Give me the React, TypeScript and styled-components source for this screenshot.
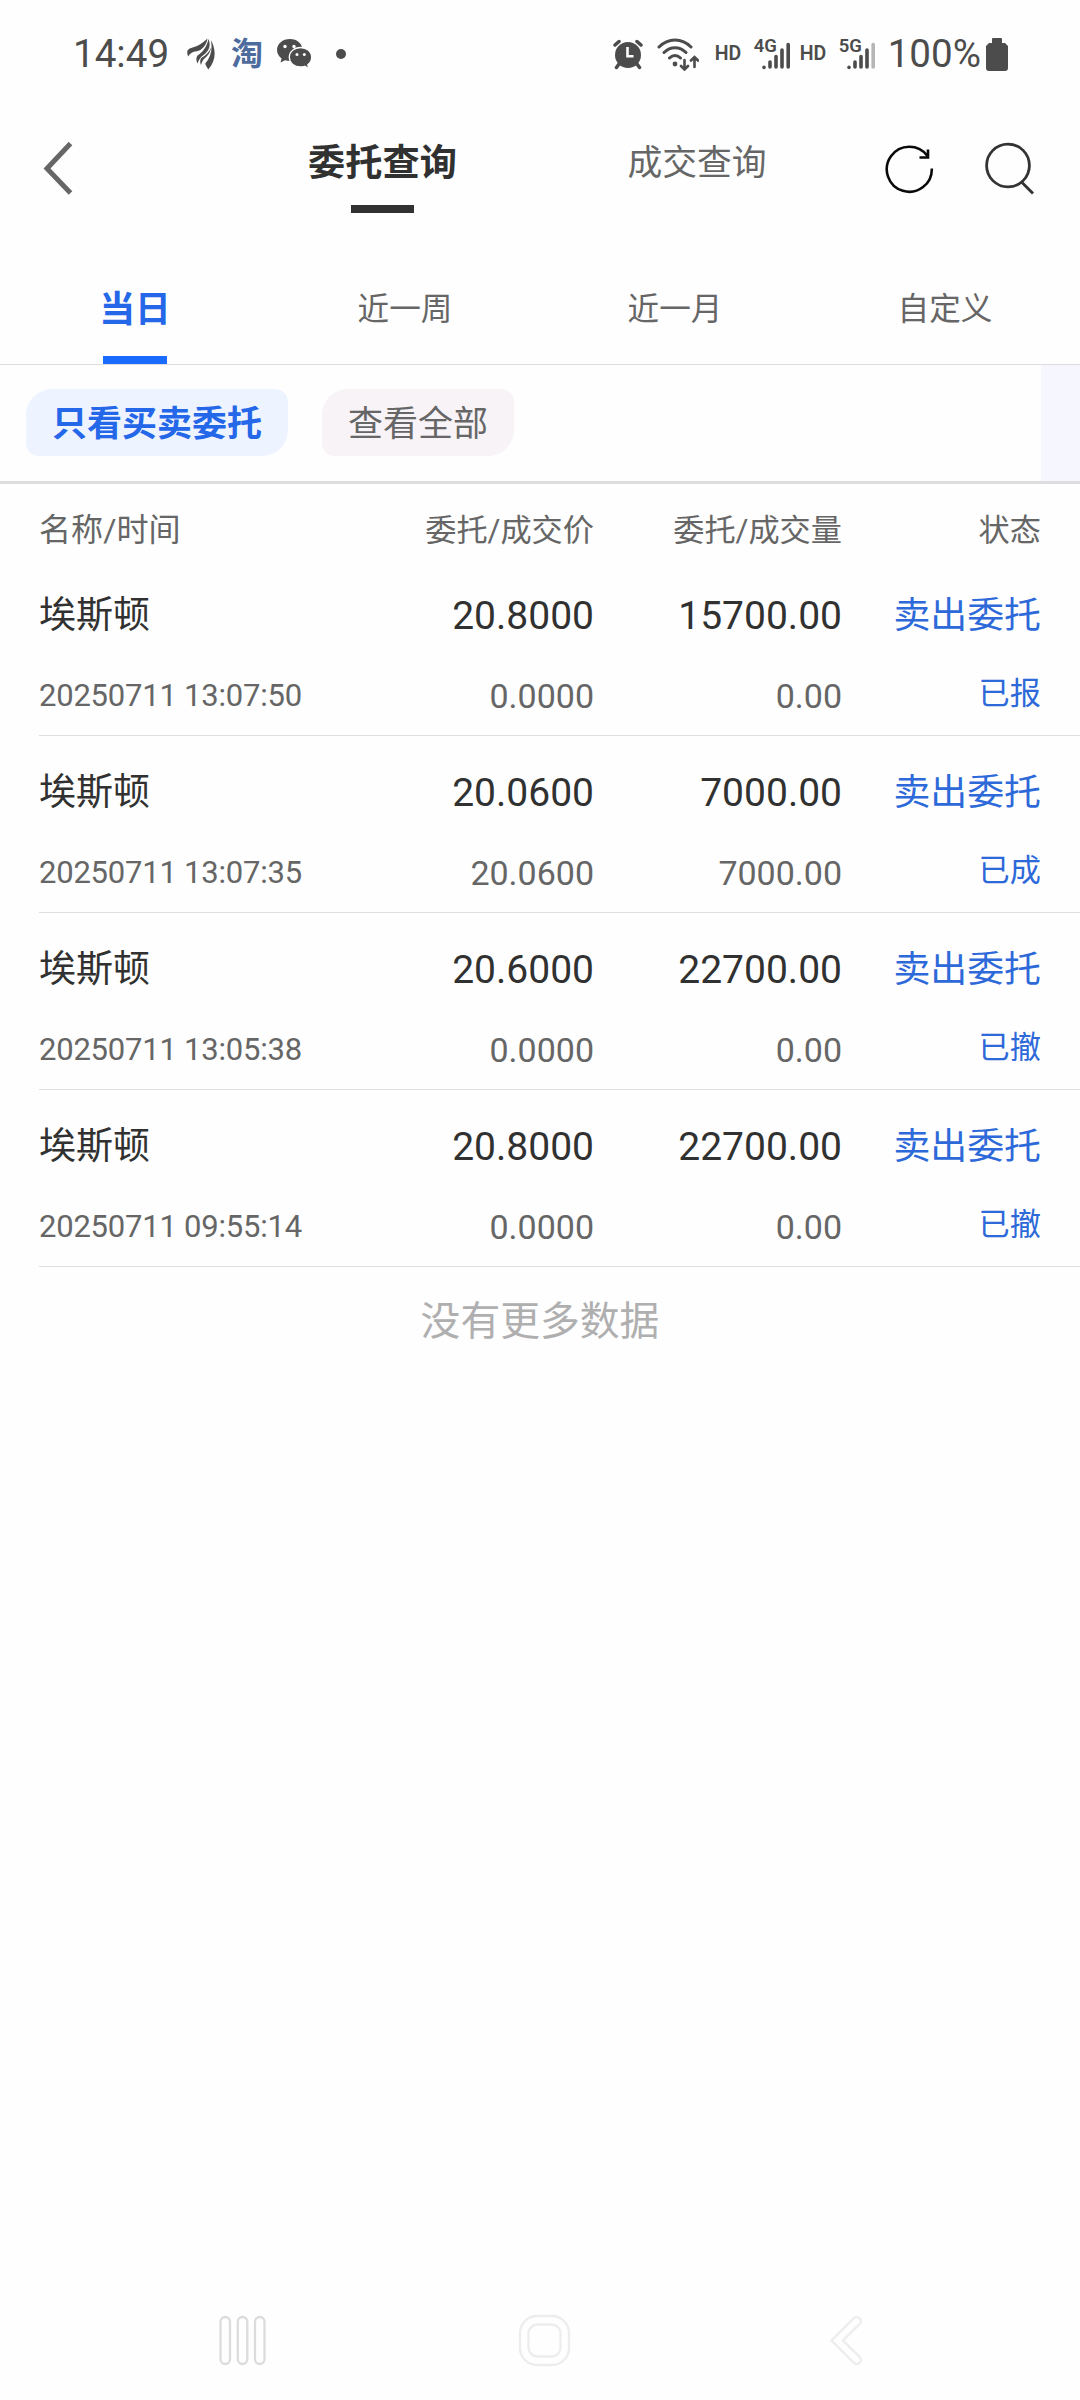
import React from 'react';
import styled, { createGlobalStyle } from 'styled-components';

const GlobalStyle = createGlobalStyle`
  * { box-sizing: border-box; }
  body { margin: 0; background: #fefefe; }
  svg { display: block; flex: none; }
`;

const Screen = styled.div`
  display: flex;
  flex-direction: column;
  width: 1080px;
  height: 2400px;
  overflow: hidden;
  background: #fefefe;
  color: #666;
  font-family: Roboto, "Noto Sans CJK SC", sans-serif;
  white-space: nowrap;
`;

const StatusBar = styled.header`
  display: flex;
  align-items: center;
  justify-content: space-between;
  height: 108px;
  padding: 0 72px 0 73px;
  color: #4b4c4b;
`;

const StatusGroup = styled.div`
  display: flex;
  align-items: center;
`;

const StatusText = styled.span`
  font-size: 38.6px;
  line-height: 46px;
`;

const TaoMark = styled.span`
  margin-left: 16px;
  width: 32px;
  color: #4d6b9d;
  font-size: 32px;
  font-weight: 700;
  line-height: 40px;
`;

const Slot = styled.span<{ $left: number }>`
  display: flex;
  margin-left: ${(p) => p.$left}px;
`;

const HdMark = styled.span<{ $left: number }>`
  width: 27px;
  margin-left: ${(p) => p.$left}px;
  font-size: 19.5px;
  font-weight: 600;
  line-height: 24px;
`;

const SignalBox = styled.span`
  display: grid;
  grid-template: 32px / 37px;
  margin-left: 12px;
`;

const SignalLabel = styled.span`
  grid-area: 1 / 1;
  font-size: 18.5px;
  font-weight: 600;
  line-height: 17px;
`;

const SignalBars = styled.svg`
  grid-area: 1 / 1;
`;

const NavBar = styled.nav`
  display: grid;
  grid-template-columns: 225px 315px 314px 226px;
  height: 152px;
`;

const BackButton = styled.div`
  padding: 34px 0 0 42px;
`;

const NavTab = styled.div<{ $active?: boolean }>`
  display: flex;
  flex-direction: column;
  align-items: center;
  padding-top: 29px;
  color: ${(p) => (p.$active ? '#303130' : '#666')};
  font-size: ${(p) => (p.$active ? 37.2 : 34.8)}px;
  font-weight: ${(p) => (p.$active ? 700 : 400)};
  line-height: 52px;
`;

const NavUnderline = styled.i`
  width: 63px;
  height: 8px;
  margin-top: 16px;
  background: #303130;
`;

const NavActions = styled.div`
  display: flex;
  gap: 50px;
  padding: 34px 0 0 30px;
`;

const RangeTabs = styled.div`
  display: grid;
  grid-template-columns: repeat(4, 1fr);
  height: 105px;
  border-bottom: 1px solid #dcdcdc;
`;

const RangeTab = styled.div<{ $active?: boolean }>`
  display: flex;
  flex-direction: column;
  align-items: center;
  justify-content: space-between;
  padding-top: 24px;
  color: ${(p) => (p.$active ? '#2467e8' : '#666')};
  font-size: ${(p) => (p.$active ? 35.8 : 31.6)}px;
  font-weight: ${(p) => (p.$active ? 700 : 400)};
  line-height: 52px;
`;

const RangeUnderline = styled.i`
  width: 64px;
  height: 8px;
  background: #1b6aff;
`;

const FilterBar = styled.div`
  display: flex;
  gap: 34px;
  height: 119px;
  padding-left: 26px;
  border-bottom: 3px solid #dedcde;
`;

const Chip = styled.div<{ $active?: boolean }>`
  height: 67px;
  margin-top: 24px;
  padding: 0 26px;
  border-radius: 26px 13px 26px 13px;
  background: ${(p) => (p.$active ? '#edf3ff' : '#f7f3f7')};
  color: ${(p) => (p.$active ? '#2467e8' : '#666')};
  font-size: 35px;
  font-weight: ${(p) => (p.$active ? 700 : 400)};
  line-height: 71px;
`;

const FilterEdge = styled.div`
  width: 39px;
  margin-left: auto;
  background: #f5f6fe;
`;

const OrderGrid = styled.div`
  display: grid;
  grid-template-columns: 255px 300px 248px 199px;
  padding-right: 39px;
`;

const HeadGrid = styled(OrderGrid)`
  height: 75px;
  padding-left: 39px;
  line-height: 93px;
`;

const Cell = styled.span<{ $start?: boolean }>`
  text-align: ${(p) => (p.$start ? 'left' : 'right')};
`;

const HeadCell = styled(Cell)`
  font-size: ${(p) => (p.$start ? 32.1 : 31.2)}px;
`;

const OrderList = styled.div`
  padding-left: 39px;
`;

const OrderRow = styled(OrderGrid)`
  grid-template-rows: 111px 65px;
  height: 177px;
  border-bottom: 1px solid #dfdfdf;
`;

const Name = styled(Cell)`
  color: #303130;
  font-size: 37px;
  line-height: 113px;
`;

const Figure = styled(Cell)`
  color: #303130;
  font-size: 39px;
  line-height: 114px;
`;

const Direction = styled(Cell)`
  color: #2d69d9;
  font-size: 36.9px;
  line-height: 113px;
`;

const Stamp = styled(Cell)`
  font-size: 31px;
  letter-spacing: -0.22px;
  line-height: 52px;
`;

const SubFigure = styled(Cell)`
  font-size: 34px;
  line-height: 52px;
`;

const State = styled(Cell)`
  color: #2d69d9;
  font-size: 31.2px;
  line-height: 48px;
`;

const EndNote = styled.p`
  margin: 24px 0 0;
  color: #b0afb0;
  font-size: 39.8px;
  line-height: 62px;
  text-align: center;
`;

const SystemNav = styled.footer`
  display: grid;
  grid-template-columns: 300px 311px 1fr;
  align-items: center;
  margin-top: auto;
  height: 119px;
  padding-left: 218px;
`;

const FeatherIcon = () => (
  <svg width="28" height="32" viewBox="0 0 28 32" fill="#4b4c4b">
    <path d="M0.500 12.500C2 10 6 9.500 10 8C14 6.500 17 3.500 20.500 0.500C19.500 7 15 12.500 9.500 13.300C5.500 14 3.500 15 1.200 18.500C0.300 16.500 0 14.500 0.500 12.500Z" />
    <path d="M21.500 1C24.200 7.500 22 13 16.500 17C13.200 19.500 12 21.500 10.500 25.500C9.300 23 8.800 20.300 10.300 17.800C15 14.500 19.500 10 21.500 1Z" />
    <path d="M23.800 2C29.500 12 29 23 21.300 31.500C20.300 29.500 18.500 27.500 18.300 25.500C24 19 25.800 11 23.800 2Z" />
    <path d="M24.300 9C23.500 14 21 18 17.500 20.500C15.800 22 14.500 24.500 14 27C13 24.500 12.800 22 14.300 20C18.500 17.500 22.500 14 24.300 9Z" />
  </svg>
);

const ChatIcon = () => (
  <svg width="36" height="30" viewBox="0 0 36 30">
    <path fill="#4b4c4b" d="M13 0C5.5 0 0 4.900 0 11C0 14.500 1.800 17.500 4.600 19.500L3.500 23.500L8 21.200C9.600 21.700 11.300 22 13 22C20 22 25.500 17 25.500 11C25.500 4.900 20 0 13 0Z" />
    <path fill="#4b4c4b" stroke="#fefefe" strokeWidth="1.300" d="M23.500 8.500C17 8.500 12.300 12.900 12.300 18.300C12.300 23.700 17 28 23.500 28C25 28 26.400 27.800 27.700 27.300L31.700 29.500L30.800 25.800C33.300 24 34.700 21.300 34.700 18.300C34.700 12.900 30 8.500 23.500 8.500Z" />
    <g fill="#fefefe">
      <circle cx="8" cy="7.500" r="1.700" />
      <circle cx="17" cy="7.500" r="1.700" />
      <circle cx="20" cy="15.500" r="1.500" />
      <circle cx="27.300" cy="15.500" r="1.500" />
    </g>
  </svg>
);

const AlarmIcon = () => (
  <svg width="30" height="31" viewBox="0 0 30 31" fill="none" strokeLinecap="round">
    <circle cx="15" cy="16" r="13" fill="#4b4c4b" />
    <path stroke="#4b4c4b" strokeWidth="3.500" d="M2 6L6 2.500M28 6L24 2.500M6 25L3.500 28.500M24 25L26.500 28.500" />
    <path stroke="#fefefe" strokeWidth="2.600" strokeLinecap="butt" d="M14.500 8V17.200H20.500" />
  </svg>
);

const WifiIcon = () => (
  <svg width="42" height="33" viewBox="0 0 42 33" fill="none" stroke="#4b4c4b" strokeWidth="3" strokeLinecap="round">
    <path d="M2 9C11 -0.500 25 -0.500 34 9M7 14.500C13.500 8 22.500 8 29 14.500M12.500 20C16 16.500 20 16.500 23.500 20" />
    <circle cx="18" cy="26" r="2.400" fill="#4b4c4b" stroke="none" />
    <path strokeWidth="2.600" d="M27.500 22V31M24 28L27.500 31.500L31 28M37.500 29V19.500M34 22.500L37.500 19L41 22.500" />
  </svg>
);

const BatteryIcon = () => (
  <svg width="22" height="33" viewBox="0 0 22 33" fill="#4b4c4b">
    <path d="M7 0H15Q16 0 16 1V5H19L22 8V30Q22 33 19 33H3Q0 33 0 30V8L3 5H6V1Q6 0 7 0Z" />
  </svg>
);

const Signal = ({ label, last = 1 }: { label: string; last?: number }) => (
  <SignalBox>
    <SignalLabel>{label}</SignalLabel>
    <SignalBars width="37" height="32" viewBox="0 0 37 32" stroke="#4b4c4b" strokeWidth="3.600" strokeLinecap="round">
      <path d="M10 29.300V29.400M16 24V29M22 18.500V29M28 12V29" />
      <path d="M34.200 6.500V29" opacity={last} />
    </SignalBars>
  </SignalBox>
);

const BackIcon = () => (
  <svg width="32" height="54" viewBox="0 0 32 54" fill="none" stroke="#666" strokeWidth="5">
    <path d="M28.500 1.500L5 26.500L28.500 51" />
  </svg>
);

const RefreshIcon = () => (
  <svg width="50" height="54" viewBox="0 0 50 54" fill="none" stroke="#0a0a0a" strokeWidth="2.600">
    <path d="M47.800 26.500A22.500 22.500 0 1 1 43.500 14M44 7.500V15.500H35.500" />
  </svg>
);

const SearchIcon = () => (
  <svg width="50" height="54" viewBox="0 0 50 54" fill="none" stroke="#333" strokeWidth="2.800">
    <circle cx="24" cy="23.500" r="21.400" />
    <path d="M37.500 40L49 51.500" />
  </svg>
);

const RecentsIcon = () => (
  <svg width="49" height="52" viewBox="0 0 49 52" fill="none" stroke="#dedbdc" strokeWidth="2.300">
    <rect x="2.500" y="2" width="9.500" height="47" rx="4.700" />
    <rect x="19.800" y="2" width="9.500" height="47" rx="4.700" />
    <rect x="37" y="2" width="9.500" height="47" rx="4.700" />
  </svg>
);

const HomeIcon = () => (
  <svg width="54" height="54" viewBox="0 0 54 54" fill="none" stroke="#eeecec" strokeWidth="2.300">
    <rect x="2" y="2" width="49" height="49" rx="17" />
    <rect x="10.500" y="10.500" width="32" height="32" rx="9" />
  </svg>
);

const SystemBackIcon = () => (
  <svg width="36" height="52" viewBox="0 0 36 52" fill="none" stroke="#eeecec" strokeWidth="2.300">
    <path d="M2.500 25.500L25 3Q27 1 29.500 2.500Q33.500 5 31 8.500L14 25.500L31 42.500Q33.500 46 29.500 48.500Q27 50 25 48Z" />
  </svg>
);

const RANGES = ['当日', '近一周', '近一月', '自定义'];

const ORDERS = [
  { time: '20250711 13:07:50', price: '20.8000', dealPrice: '0.0000', amount: '15700.00', dealAmount: '0.00', state: '已报' },
  { time: '20250711 13:07:35', price: '20.0600', dealPrice: '20.0600', amount: '7000.00', dealAmount: '7000.00', state: '已成' },
  { time: '20250711 13:05:38', price: '20.6000', dealPrice: '0.0000', amount: '22700.00', dealAmount: '0.00', state: '已撤' },
  { time: '20250711 09:55:14', price: '20.8000', dealPrice: '0.0000', amount: '22700.00', dealAmount: '0.00', state: '已撤' },
];

export default function App() {
  return (
    <Screen>
      <GlobalStyle />
      <StatusBar>
        <StatusGroup>
          <StatusText>14:49</StatusText>
          <Slot $left={18}><FeatherIcon /></Slot>
          <TaoMark>淘</TaoMark>
          <Slot $left={14}><ChatIcon /></Slot>
          <Slot $left={23}>
            <svg width="10" height="10" viewBox="0 0 10 10"><circle cx="5" cy="5" r="5" fill="#4b4c4b" /></svg>
          </Slot>
        </StatusGroup>
        <StatusGroup>
          <AlarmIcon />
          <Slot $left={14}><WifiIcon /></Slot>
          <HdMark $left={16}>HD</HdMark>
          <Signal label="4G" />
          <HdMark $left={9}>HD</HdMark>
          <Signal label="5G" last={0.4} />
          <Slot $left={12}><StatusText>100%</StatusText></Slot>
          <Slot $left={5}><BatteryIcon /></Slot>
        </StatusGroup>
      </StatusBar>

      <NavBar>
        <BackButton><BackIcon /></BackButton>
        <NavTab $active>
          委托查询
          <NavUnderline />
        </NavTab>
        <NavTab>成交查询</NavTab>
        <NavActions>
          <RefreshIcon />
          <SearchIcon />
        </NavActions>
      </NavBar>

      <RangeTabs>
        {RANGES.map((range, i) => (
          <RangeTab key={range} $active={i === 0}>
            {range}
            {i === 0 && <RangeUnderline />}
          </RangeTab>
        ))}
      </RangeTabs>

      <FilterBar>
        <Chip $active>只看买卖委托</Chip>
        <Chip>查看全部</Chip>
        <FilterEdge />
      </FilterBar>

      <HeadGrid>
        <HeadCell $start>名称/时间</HeadCell>
        <HeadCell>委托/成交价</HeadCell>
        <HeadCell>委托/成交量</HeadCell>
        <HeadCell>状态</HeadCell>
      </HeadGrid>

      <OrderList>
        {ORDERS.map((o) => (
          <OrderRow key={o.time}>
            <Name $start>埃斯顿</Name>
            <Figure>{o.price}</Figure>
            <Figure>{o.amount}</Figure>
            <Direction>卖出委托</Direction>
            <Stamp $start>{o.time}</Stamp>
            <SubFigure>{o.dealPrice}</SubFigure>
            <SubFigure>{o.dealAmount}</SubFigure>
            <State>{o.state}</State>
          </OrderRow>
        ))}
      </OrderList>

      <EndNote>没有更多数据</EndNote>

      <SystemNav>
        <RecentsIcon />
        <HomeIcon />
        <SystemBackIcon />
      </SystemNav>
    </Screen>
  );
}
